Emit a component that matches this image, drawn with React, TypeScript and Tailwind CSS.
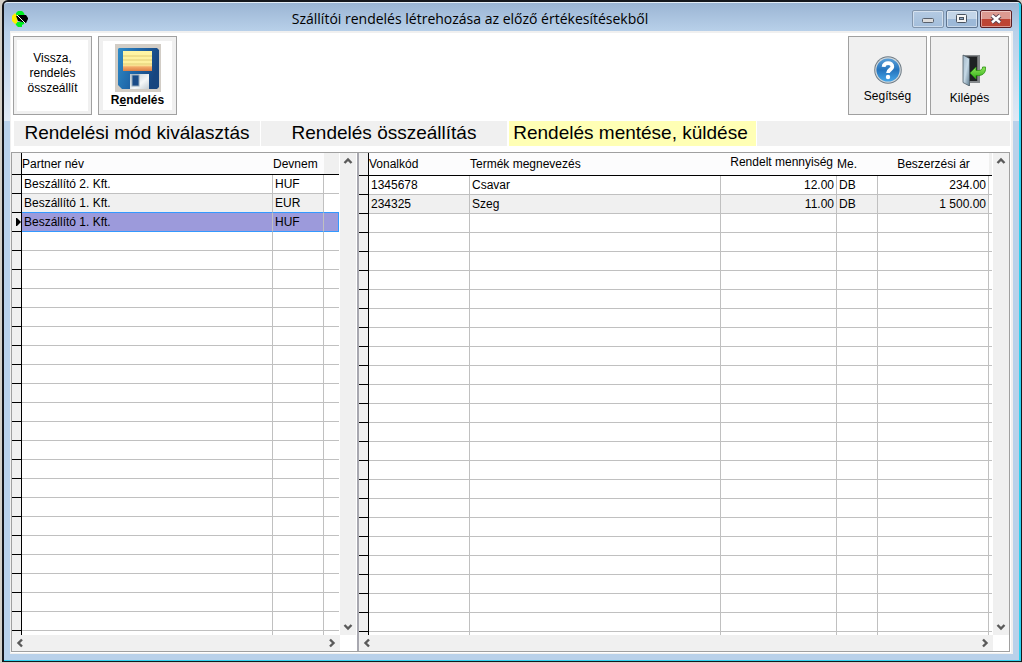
import React from "react";

type Column = {
  title: string;
  width: string;
  align?: string;
  head?: string;
};

type GridProps = {
  label: string;
  columns: Column[];
  rows: string[][];
  selected?: number;
  headHeight: string;
  className: string;
};

const ROWS = 25;

const supplierColumns: Column[] = [
  { title: "Partner név", width: "" },
  { title: "Devnem", width: "w-[51px]" },
];

const supplierRows = [
  ["Beszállító 2. Kft.", "HUF"],
  ["Beszállító 1. Kft.", "EUR"],
  ["Beszállító 1. Kft.", "HUF"],
];

const itemColumns: Column[] = [
  { title: "Vonalkód", width: "w-[101px]" },
  { title: "Termék megnevezés", width: "" },
  { title: "Rendelt mennyiség", width: "w-[116px]", align: "text-right", head: "text-right pb-1 pr-1" },
  { title: "Me.", width: "w-[41px]" },
  { title: "Beszerzési ár", width: "w-[111px]", align: "text-right", head: "text-center" },
];

const itemRows = [
  ["1345678", "Csavar", "12.00", "DB", "234.00"],
  ["234325", "Szeg", "11.00", "DB", "1 500.00"],
];

function Chevron({ d }: { d: string }) {
  return (
    <svg viewBox="0 0 10 10" className="size-[10px]" fill="none" stroke="#5a5a5a" strokeWidth="2.4" aria-hidden="true">
      <path d={d} />
    </svg>
  );
}

function ScrollButton({ label, d }: { label: string; d: string }) {
  return (
    <button type="button" aria-label={label} className="flex size-4 shrink-0 items-center justify-center">
      <Chevron d={d} />
    </button>
  );
}

function Grid({ label, columns, rows, selected = -1, headHeight, className }: GridProps) {
  const lines = Array.from({ length: ROWS }, (_, i) => rows[i] ?? columns.map(() => ""));
  return (
    <section className={`flex min-w-0 flex-col ${className}`}>
      <div className="flex min-h-0 flex-1">
        <div className="min-w-0 flex-1 overflow-hidden">
          <table aria-label={label} className="w-full table-fixed border-separate border-spacing-0 text-left">
            <colgroup>
              <col className="w-[10px]" />
              {columns.map((c) => (
                <col key={c.title} className={c.width} />
              ))}
              <col className={selected >= 0 ? "w-[15px]" : "w-[3px]"} />
            </colgroup>
            <thead>
              <tr className={headHeight}>
                <td className="border-r border-b border-black bg-[#f0f0f0] p-0" />
                {columns.map((c) => (
                  <th
                    key={c.title}
                    scope="col"
                    className={`border-b border-black bg-[#fcfcfd] p-0 font-normal whitespace-nowrap ${c.head ?? ""}`}
                  >
                    {c.title}
                  </th>
                ))}
                <td className="border-b border-black bg-[#f0f0f0] p-0" />
              </tr>
            </thead>
            <tbody>
              {lines.map((line, r) => {
                const on = r === selected;
                const band = on ? "bg-[#9c9adb]" : r === 1 ? "bg-[#f0f0f0]" : "bg-white";
                const under = on || r === selected - 1 ? "border-b-[#3399ff]" : "border-b-[#c0c0c0]";
                return (
                  <tr key={r} className="h-[19px]">
                    <td className="border-r border-b border-black bg-[#f0f0f0] p-0">
                      {on && (
                        <svg viewBox="0 0 5 8" className="ml-auto h-2 w-[5px]" aria-hidden="true">
                          <path d="M0 0H1L5 4L1 8H0Z" fill="#000" />
                        </svg>
                      )}
                    </td>
                    {line.map((text, c) => (
                      <td
                        key={c}
                        className={`border-r border-b border-r-[#c0c0c0] px-[2px] py-0 leading-4 whitespace-nowrap ${under} ${band} ${columns[c].align ?? ""}`}
                      >
                        {text}
                      </td>
                    ))}
                    <td
                      className={`border-b p-0 ${under} ${on ? "border-r border-r-[#3399ff] bg-[#9c9adb]" : "bg-white"}`}
                    />
                  </tr>
                );
              })}
            </tbody>
          </table>
        </div>
        <div className="ml-px flex w-4 shrink-0 flex-col justify-between bg-[#f0f0f0]">
          <ScrollButton label="Fel" d="M1.5 7L5 3.5L8.5 7" />
          <ScrollButton label="Le" d="M1.5 3L5 6.5L8.5 3" />
        </div>
      </div>
      <div className="mr-4 flex h-4 shrink-0 justify-between bg-[#f0f0f0]">
        <ScrollButton label="Balra" d="M7 1.5L3.5 5L7 8.5" />
        <ScrollButton label="Jobbra" d="M3 1.5L6.5 5L3 8.5" />
      </div>
    </section>
  );
}

function AppIcon() {
  return (
    <svg viewBox="0 0 16 16" className="size-4" aria-hidden="true">
      <path d="M4 2L6 0H10L12 2L13 5H4Z" fill="#00f020" />
      <path d="M3 11H13L12 13L10 14V16H6L4 14Z" fill="#00f020" />
      <path d="M3 2L6 6L5 12L3 13L0 10V5Z" fill="#ffee00" />
      <path d="M4 5L7 4H14L16 7V8L14 12L10 11L6 10Z" fill="#000" />
      <path d="M5 4L13 12" stroke="#fff" strokeWidth="1" />
    </svg>
  );
}

function FloppyIcon() {
  return (
    <svg viewBox="0 0 46 48" className="h-12 w-[46px]" aria-hidden="true">
      <defs>
        <linearGradient id="disk" x1="0" y1="0" x2="1" y2="0.3">
          <stop offset="0" stopColor="#2f8cc8" />
          <stop offset="0.5" stopColor="#1f66a8" />
          <stop offset="1" stopColor="#17457f" />
        </linearGradient>
        <linearGradient id="note" x1="0" y1="0" x2="0" y2="1">
          <stop offset="0" stopColor="#fff6a4" />
          <stop offset="0.7" stopColor="#fdee9c" />
          <stop offset="0.8" stopColor="#f2a968" />
          <stop offset="1" stopColor="#dd7f45" />
        </linearGradient>
        <linearGradient id="shutter" x1="0" y1="0" x2="1" y2="1">
          <stop offset="0" stopColor="#b9c4cc" />
          <stop offset="0.6" stopColor="#f4f7f8" />
          <stop offset="1" stopColor="#c3ccd2" />
        </linearGradient>
      </defs>
      <rect width="46" height="48" fill="#d2cdc6" />
      <path d="M4 4H42L44 6V43L42 45H7L3 41V5Z" fill="url(#disk)" />
      <rect x="8" y="7" width="29" height="20" fill="url(#note)" />
      <path d="M8 12H37M8 16H37M8 20H37" stroke="#e0cc74" strokeWidth="1" />
      <path d="M15 30H34V45H15Z" fill="url(#shutter)" />
      <rect x="17" y="31" width="7" height="11" fill="#1a4c88" stroke="#8fa5b8" />
    </svg>
  );
}

function HelpIcon() {
  return (
    <svg viewBox="0 0 28 28" className="size-7" aria-hidden="true">
      <defs>
        <linearGradient id="help" x1="0" y1="0" x2="0" y2="1">
          <stop offset="0" stopColor="#5a9fd8" />
          <stop offset="0.5" stopColor="#2574bd" />
          <stop offset="1" stopColor="#45a6e8" />
        </linearGradient>
      </defs>
      <circle cx="14" cy="14" r="13.8" fill="#6f7c86" />
      <circle cx="14" cy="14" r="12.8" fill="#cfd7dc" />
      <circle cx="14" cy="14" r="11.6" fill="url(#help)" />
      <path d="M9.6 10.8C9.8 5.8 18.6 5.9 18.3 10.8C18.1 13.8 14 13.6 14 17" fill="none" stroke="#fff" strokeWidth="3.8" />
      <circle cx="14" cy="21" r="2.2" fill="#fff" />
    </svg>
  );
}

function ExitIcon() {
  return (
    <svg viewBox="-8 0 32 32" className="size-8" aria-hidden="true">
      <defs>
        <linearGradient id="door" x1="0" y1="0" x2="1" y2="1">
          <stop offset="0" stopColor="#a3b8c8" />
          <stop offset="0.5" stopColor="#c6d9e6" />
          <stop offset="1" stopColor="#5f7b8e" />
        </linearGradient>
        <linearGradient id="leaf" x1="0" y1="0" x2="0" y2="1">
          <stop offset="0" stopColor="#8fe65a" />
          <stop offset="1" stopColor="#2fae17" />
        </linearGradient>
      </defs>
      <path d="M1 1H18V29H8V27H16V3H1Z" fill="#85898c" />
      <path d="M2 2.6H15.6V27H7Z" fill="#1e2123" />
      <path d="M1 1L7.5 4.5V32L1 28.5Z" fill="url(#door)" stroke="#4d5c66" strokeWidth="0.8" />
      <path d="M8 19L14 13V16.4C18 16.8 20.4 16.2 20.6 13H23.6C24 19.6 20.4 22 14 21.6V25Z" fill="url(#leaf)" stroke="#27910f" strokeWidth="0.8" />
    </svg>
  );
}

const captionButton =
  "flex h-[18px] w-8 items-center justify-center rounded-[2px] border shadow-[inset_0_0_0_1px_rgba(255,255,255,0.45)]";
const toolButton =
  "flex size-[79px] flex-col items-center justify-center border border-[#a0a0a0] text-xs";

export default function App() {
  return (
    <div className="flex h-screen min-h-[400px] bg-[#d4d0c8] pb-px pl-[2px] font-['Liberation_Sans',Arial,sans-serif] text-xs text-black">
      <main className="flex min-w-0 flex-1 flex-col rounded-t-md border-2 border-r border-b border-[#15171c] bg-[linear-gradient(#9ab4d3_0,#b9d1ea_30px,#dfe9f5_119px,#b9d1ea_119px)]">
        <div className="flex min-h-0 flex-1 flex-col rounded-t border-t border-r-2 border-b border-t-[#e4edf6] border-r-[#2fd0ee] border-b-[#2fd0ee]">
          <header className="flex h-7 shrink-0 items-center pr-[7px] pl-2">
            <div className="flex w-4 pt-1">
              <AppIcon />
            </div>
            <h1 className="flex-1 pt-1 text-center font-['Open_Sans','Noto_Sans',sans-serif] text-[14px] leading-5">
              Szállítói rendelés létrehozása az előző értékesítésekből
            </h1>
            <div className="flex gap-[2px] pt-1">
              <button type="button" aria-label="Kis méret" className={`${captionButton} border-[#8296ad] bg-linear-to-b from-[#b4cae2] to-[#a3bedb]`}>
                <svg viewBox="0 0 12 6" className="mt-1 h-[6px] w-3" aria-hidden="true">
                  <rect x="0.5" y="0.5" width="11" height="4" rx="1" fill="#dcdcdc" stroke="#58606c" />
                </svg>
              </button>
              <button type="button" aria-label="Teljes méret" className={`${captionButton} border-[#5f7590] bg-linear-to-b from-[#c3d5e8] from-50% to-[#9db9d8] to-50%`}>
                <svg viewBox="0 0 12 10" className="h-[10px] w-3" aria-hidden="true">
                  <rect x="0.5" y="0.5" width="10" height="8" rx="1" fill="#f4f4f4" stroke="#48525f" />
                  <rect x="3.5" y="3.5" width="4" height="2" fill="#8fa9c6" stroke="#48525f" />
                </svg>
              </button>
              <button type="button" aria-label="Bezárás" className={`${captionButton} border-[#5b1d22] bg-linear-to-b from-[#dc9a90] from-50% to-[#bd4433] to-50%`}>
                <svg viewBox="0 0 12 10" className="h-[10px] w-3" aria-hidden="true">
                  <path d="M2 1.5L10 8.5M10 1.5L2 8.5" stroke="#5a4350" strokeWidth="4.4" />
                  <path d="M2 1.5L10 8.5M10 1.5L2 8.5" stroke="#fff" strokeWidth="2.4" />
                </svg>
              </button>
            </div>
          </header>

          <div className="mr-[6px] mb-[6px] ml-[6px] flex min-h-0 flex-1 flex-col border-t-2 border-r-2 border-b border-l border-[#f0f0f0] bg-white">
            <div className="flex shrink-0 items-start gap-[6px] pt-[3px] pr-[2px] pl-[2px]">
              <button type="button" className={`${toolButton} bg-white leading-[15px] shadow-[inset_0_0_0_3px_#f0f0f0]`}>
                <span className="w-16 pb-1">Vissza, rendelés összeállít</span>
              </button>
              <button type="button" className={`${toolButton} bg-white font-bold shadow-[inset_0_0_0_4px_#f0f0f0]`}>
                <FloppyIcon />
                <span>
                  R<u>e</u>ndelés
                </span>
              </button>
              <div className="ml-auto flex gap-[3px]">
                <button type="button" className={`${toolButton} gap-1 bg-[#f0f0f0] pt-2`}>
                  <HelpIcon />
                  Segítség
                </button>
                <button type="button" className={`${toolButton} gap-1 bg-[#f0f0f0] pt-2`}>
                  <ExitIcon />
                  Kilépés
                </button>
              </div>
            </div>

            <nav aria-label="Lépések" className="mt-[6px] mr-px ml-[3px] flex h-[25px] shrink-0 gap-px text-[19px] leading-6">
              <a href="#mod" className="w-[246px] bg-[#f0f0f0] text-center">
                Rendelési mód kiválasztás
              </a>
              <a href="#osszeallitas" className="w-[246px] bg-[#f0f0f0] text-center">
                Rendelés összeállítás
              </a>
              <a href="#mentes" aria-current="step" className="ml-px w-[247px] bg-[#ffffb5] pr-1 text-center">
                Rendelés mentése, küldése
              </a>
              <div className="flex-1 bg-[#f0f0f0]" />
            </nav>

            <div className="mt-[6px] mr-px mb-px flex min-h-0 flex-1 border border-[#a0a0a0]">
              <Grid
                label="Partnerek"
                columns={supplierColumns}
                rows={supplierRows}
                selected={2}
                headHeight="h-[22px]"
                className="w-[345px] shrink-0 pr-px"
              />
              <div className="w-[2px] shrink-0 bg-[#a8a8b0]" />
              <Grid
                label="Tételek"
                columns={itemColumns}
                rows={itemRows}
                headHeight="h-[23px]"
                className="flex-1"
              />
            </div>
          </div>
        </div>
      </main>
    </div>
  );
}
